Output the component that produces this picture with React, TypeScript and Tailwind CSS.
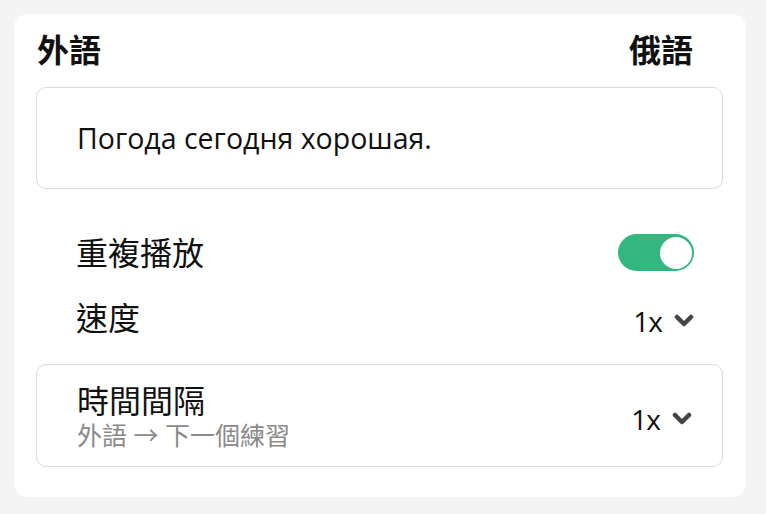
import { useState } from "react";

function Chevron() {
  return (
    <svg width="20" height="14" viewBox="0 0 20 14" className="ml-[12px]">
      <polyline
        points="3,3 10,10 17,3"
        fill="none"
        stroke="#444"
        strokeWidth="4.5"
        strokeLinecap="round"
        strokeLinejoin="round"
      />
    </svg>
  );
}

function Select({ value }: { value: string }) {
  return (
    <div className="flex items-center mt-[7px]">
      <span className="text-[28px] tracking-[-1px] text-[#111]">{value}</span>
      <Chevron />
    </div>
  );
}

export default function App() {
  const [repeat, setRepeat] = useState(true);

  return (
    <main className="min-h-screen bg-[#f4f4f4] pt-[14px] pl-[14px] pr-[20px] pb-[18px] font-['Open_Sans','Noto_Sans_CJK_TC',sans-serif]">
      <div className="bg-white rounded-[14px] pl-[22px] pr-[23px] pt-[18px] pb-[30px]">
        <div className="flex justify-between items-center text-[32px] font-bold leading-[36px] text-[#111]">
          <span className="pl-[1px]">外語</span>
          <span className="pr-[30px]">俄語</span>
        </div>

        <div className="mt-[19px] h-[102px] border border-[#dcdcdc] rounded-[10px] px-[40px] flex items-center">
          <p className="text-[28.5px] text-[#111]">Погода сегодня хорошая.</p>
        </div>

        <div className="pt-[31px] pl-[40px] pr-[29px]">
          <div className="h-[65px] flex items-center justify-between">
            <span className="text-[32px] text-[#111]">重複播放</span>
            <button
              onClick={() => setRepeat(!repeat)}
              className={
                repeat
                  ? "w-[76px] h-[37px] rounded-full bg-[#34b77f] flex items-center justify-end pr-[2px]"
                  : "w-[76px] h-[37px] rounded-full bg-[#ddd] flex items-center justify-start pl-[2px]"
              }
            >
              <span className="w-[32px] h-[32px] rounded-full bg-white" />
            </button>
          </div>
          <div className="h-[65px] flex items-center justify-between">
            <span className="text-[32px] text-[#111]">速度</span>
            <Select value="1x" />
          </div>
        </div>

        <div className="mt-[14px] h-[103px] border border-[#dcdcdc] rounded-[10px] pl-[40px] pr-[30px] flex items-center justify-between">
          <div className="flex flex-col">
            <span className="text-[32px] leading-[38px] text-[#111]">時間間隔</span>
            <span className="text-[25px] leading-[30px] text-[#8a8a8a]">外語 → 下一個練習</span>
          </div>
          <Select value="1x" />
        </div>
      </div>
    </main>
  );
}
